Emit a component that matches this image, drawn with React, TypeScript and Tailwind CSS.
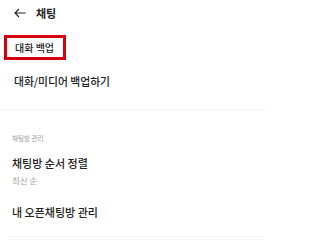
import React from 'react';

const font = { fontFamily: '"Noto Sans CJK KR", "Noto Sans", sans-serif' };

const BackArrow: React.FC = () => (
  <svg width="12" height="10" viewBox="0 0 12 10" fill="none" stroke="#222" strokeWidth="1.1">
    <path d="M11.5 5H1M5 1L1 5l4 4" />
  </svg>
);

const App: React.FC = () => {
  return (
    <div className="w-[271px] h-[249px] bg-white text-[#222] overflow-hidden" style={font}>
      {/* header */}
      <div className="h-[26px] flex items-center pl-[14px]">
        <BackArrow />
        <span className="ml-[10px] text-[11px] font-bold leading-none">채팅</span>
      </div>

      {/* highlighted row */}
      <div className="ml-[4px] mt-[9px] w-[62px] h-[25px] border-[3px] border-[#d8000e] flex items-center pl-[8px]">
        <span className="text-[10px] font-medium leading-none whitespace-nowrap">대화 백업</span>
      </div>

      <div className="h-[42px] flex items-center pl-[14px]">
        <span className="text-[10.8px] font-medium leading-none">대화/미디어 백업하기</span>
      </div>

      <div className="mt-[7px] h-[2px] w-[265px] bg-[#f8f8f8]" />

      {/* section */}
      <div className="pl-[12px] flex flex-col">
        <div className="mt-[20px] h-[14px] leading-[14px] text-[6.5px] text-[#9a9a9a]">채팅방 관리</div>
        <div className="mt-[11px] h-[14px] leading-[14px] text-[11px] font-medium">채팅방 순서 정렬</div>
        <div className="mt-[3px] h-[14px] leading-[14px] text-[8.5px] text-[#a8a8a8]">최신 순</div>
        <div className="mt-[18px] h-[14px] leading-[14px] text-[11px] font-medium">내 오픈채팅방 관리</div>
      </div>

      <div className="mt-[17px] ml-[8px] w-[256px] h-[4px] border-y border-[#f5f5f5]" />
    </div>
  );
};

export default App;
